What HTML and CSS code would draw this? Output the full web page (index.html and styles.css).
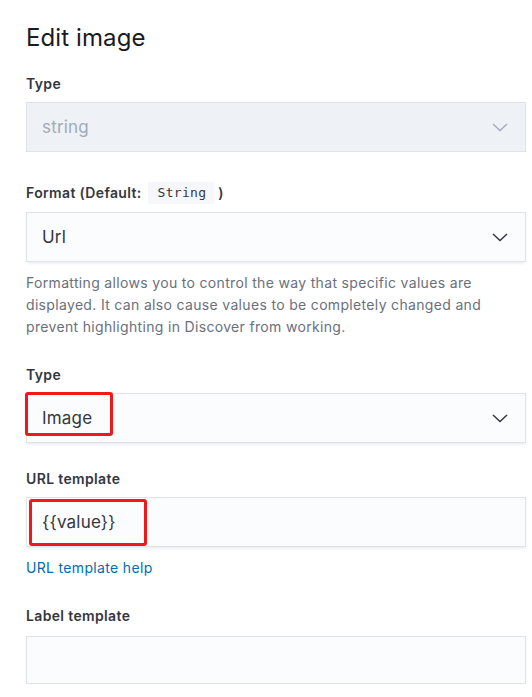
FILE: index.html
```html
<!DOCTYPE html>
<html>
<head>
<meta charset="utf-8">
<link rel="stylesheet" href="styles.css">
</head>
<body>
<div class="panel">
  <h1 class="title">Edit image</h1>

  <div class="row row-first">
    <div class="label">Type</div>
    <div class="field field-disabled">
      <span class="value">string</span>
      <svg class="chev" width="16" height="9" viewBox="0 0 16 9"><path d="M1 1 L8 7.5 L15 1" fill="none" stroke="#a2abba" stroke-width="1.3"/></svg>
    </div>
  </div>

  <div class="row row-format">
    <div class="label label-code">Format (Default: <code class="code">String</code>)</div>
    <div class="field">
      <span class="value">Url</span>
      <svg class="chev" width="16" height="9" viewBox="0 0 16 9"><path d="M1 1 L8 7.5 L15 1" fill="none" stroke="#343741" stroke-width="1.5"/></svg>
    </div>
    <p class="help">Formatting allows you to control the way that specific values are displayed. It can also cause values to be completely changed and prevent highlighting in Discover from working.</p>
  </div>

  <div class="row row-after-help">
    <div class="label">Type</div>
    <div class="field">
      <span class="value">Image</span>
      <svg class="chev" width="16" height="9" viewBox="0 0 16 9"><path d="M1 1 L8 7.5 L15 1" fill="none" stroke="#343741" stroke-width="1.5"/></svg>
      <span class="mark mark-image"></span>
    </div>
  </div>

  <div class="row row-url">
    <div class="label">URL template</div>
    <div class="field">
      <span class="value">{{value}}</span>
      <span class="mark mark-url"></span>
    </div>
    <a class="link" href="#">URL template help</a>
  </div>

  <div class="row row-after-link">
    <div class="label label-last">Label template</div>
    <div class="field field-last"></div>
  </div>
</div>
</body>
</html>
```

FILE: styles.css
```css
html, body {
  margin: 0;
  padding: 0;
  background: #ffffff;
}

body {
  font-family: Inter, "Noto Sans", sans-serif;
  color: #343741;
}

.panel {
  width: 500px;
  padding: 22px 0 0 26px;
}

.title {
  margin: 0;
  font-size: 24px;
  line-height: 32px;
  font-weight: 400;
  color: #1a1c21;
  letter-spacing: 0.1px;
}

.row-first {
  margin-top: 20px;
}

.row-format {
  margin-top: 30px;
}

.row-after-help {
  margin-top: 27px;
}

.row-url {
  margin-top: 26px;
}

.row-after-link {
  margin-top: 28px;
}

.label {
  font-size: 14px;
  line-height: 20px;
  font-weight: 600;
  letter-spacing: 0.35px;
  color: #343741;
  margin-bottom: 8px;
  display: flex;
  align-items: center;
}

.label-code {
  height: 22px;
  margin-bottom: 8px;
}

.label-last {
  margin-bottom: 10px;
}

.code {
  font-family: "DejaVu Sans Mono", "Liberation Mono", monospace;
  font-weight: 400;
  font-size: 13px;
  line-height: 22px;
  letter-spacing: 0.3px;
  background: #f5f7fa;
  color: #343741;
  padding: 0 8px 0 10px;
  margin: 0 4px 0 6px;
}

.field {
  position: relative;
  height: 50px;
  box-sizing: border-box;
  background: #fbfcfd;
  border: 1px solid #dfe3e9;
  box-shadow: 0 2px 3px -1px rgba(152, 162, 179, 0.25);
  display: flex;
  align-items: center;
  padding: 0 16px 0 15px;
}

.field-last {
  height: 48px;
}

.field-disabled {
  background: #eef1f5;
  box-shadow: none;
}

.value {
  flex: 1;
  font-size: 17px;
  line-height: 24px;
  letter-spacing: 0.2px;
  color: #343741;
}

.field-disabled .value {
  color: #a2abba;
}

.chev {
  display: block;
  margin-right: 1px;
}

.help {
  margin: 10px 0 0 0;
  font-size: 14px;
  line-height: 22px;
  letter-spacing: 0.33px;
  color: #69707d;
}

.link {
  display: block;
  margin-top: 10px;
  font-size: 14px;
  line-height: 21px;
  letter-spacing: 0.33px;
  color: #006bb8;
  text-decoration: none;
}

.mark {
  position: absolute;
  border: 3px solid #f01818;
  border-radius: 3px;
  box-sizing: border-box;
}

.mark-image {
  left: -2px;
  top: -2px;
  width: 88px;
  height: 44px;
}

.mark-url {
  left: 2px;
  top: 1px;
  width: 118px;
  height: 47px;
}
```
